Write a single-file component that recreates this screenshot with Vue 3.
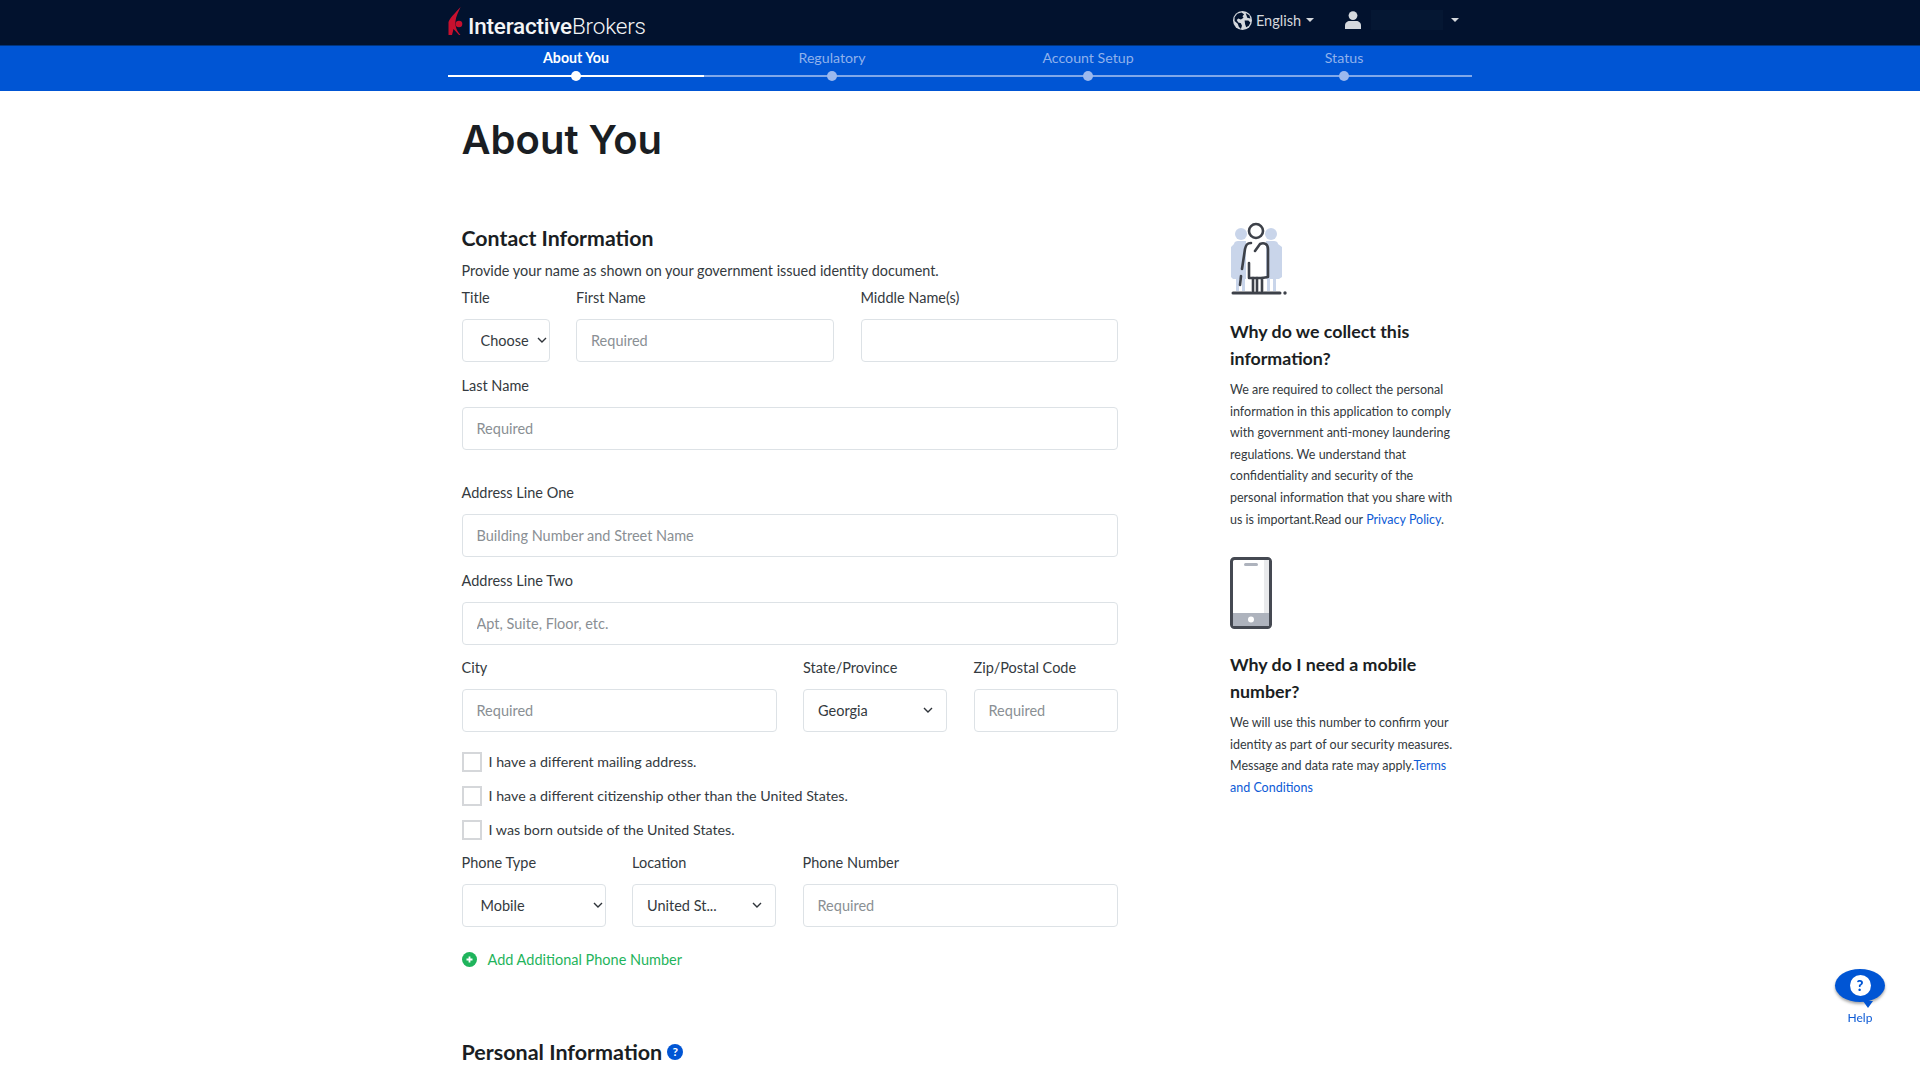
<template>
  <div class="page">
    <header class="topbar">
      <div class="wrap topbar-inner">
        <a class="logo">
          <svg class="logo-mark" viewBox="0 0 15 28" width="15" height="28">
            <path d="M12.6 0 C9 4 2.5 10 0.5 15 L0.5 28 L4 28 L5.5 22 L11 28 L12.5 28 C9 24 7 20 7.5 14 C8 9 10.5 5 12.6 0 Z" fill="#c8102e" />
            <circle cx="11" cy="17" r="3.3" fill="#c8102e" />
          </svg>
          <span class="logo-text"><b>Interactive</b>Brokers</span>
        </a>
        <div class="top-actions">
          <span class="lang">
            <svg viewBox="0 0 18 18" width="19" height="19">
              <circle cx="9" cy="9" r="9" fill="#d5d8dd" />
              <path d="M4 2.5 L8 1.5 L10.5 3 L9 5 L10 6.5 L7.5 8 L5 7 L3.5 8.5 L5 11 L7.5 11.5 L8.5 14 L7.5 17 L5.5 15 L4.5 12 L1.5 9.5 L1.5 6 Z M11 9 L14.5 9 L16.5 11 L15 14 L12.5 15.5 L11.5 12.5 Z M12 2 L15.5 4 L16.5 7 L13.5 6.5 Z" fill="#02122e" />
            </svg>
            English
            <i class="caret"></i>
          </span>
          <svg class="user" viewBox="0 0 16 18" width="16" height="18">
            <circle cx="8" cy="4.6" r="4.4" fill="#d5d8dd" />
            <path d="M0 18 L0 14.5 C0 11.5 2.5 10 4.5 10 L11.5 10 C13.5 10 16 11.5 16 14.5 L16 18 Z" fill="#d5d8dd" />
          </svg>
          <span class="account"></span>
          <i class="caret"></i>
        </div>
      </div>
    </header>

    <nav class="stepbar">
      <div class="wrap steps">
        <div v-for="(s, i) in steps" :key="s" class="step" :class="{ active: i === 0 }">
          <span class="step-name">{{ s }}</span>
          <span class="step-track"><span class="step-dot"></span></span>
        </div>
      </div>
    </nav>

    <main class="wrap content">
      <h1>About You</h1>
      <div class="columns">
        <form class="form" @submit.prevent>
          <h2>Contact Information</h2>
          <p class="hint">Provide your name as shown on your government issued identity document.</p>

          <div class="row row-name">
            <div class="field">
              <label>Title</label>
              <div class="select small">
                <select><option>Choose</option></select>
                <svg class="chev" viewBox="0 0 10 6" width="10" height="6"><path d="M1 1 L5 5 L9 1" /></svg>
              </div>
            </div>
            <div class="field">
              <label>First Name</label>
              <input placeholder="Required" />
            </div>
            <div class="field">
              <label>Middle Name(s)</label>
              <input />
            </div>
          </div>

          <div class="row row-gap">
            <div class="field">
              <label>Last Name</label>
              <input placeholder="Required" />
            </div>
          </div>

          <div class="row">
            <div class="field">
              <label>Address Line One</label>
              <input placeholder="Building Number and Street Name" />
            </div>
          </div>

          <div class="row">
            <div class="field">
              <label>Address Line Two</label>
              <input placeholder="Apt, Suite, Floor, etc." />
            </div>
          </div>

          <div class="row row-city">
            <div class="field">
              <label>City</label>
              <input placeholder="Required" />
            </div>
            <div class="field">
              <label>State/Province</label>
              <div class="select">
                <select><option>Georgia</option></select>
                <svg class="chev" viewBox="0 0 10 6" width="10" height="6"><path d="M1 1 L5 5 L9 1" /></svg>
              </div>
            </div>
            <div class="field">
              <label>Zip/Postal Code</label>
              <input placeholder="Required" />
            </div>
          </div>

          <div class="checks">
            <label v-for="c in checks" :key="c" class="check">
              <input type="checkbox" />
              <span>{{ c }}</span>
            </label>
          </div>

          <div class="row row-phone">
            <div class="field">
              <label>Phone Type</label>
              <div class="select inset">
                <select><option>Mobile</option></select>
                <svg class="chev" viewBox="0 0 10 6" width="10" height="6"><path d="M1 1 L5 5 L9 1" /></svg>
              </div>
            </div>
            <div class="field">
              <label>Location</label>
              <div class="select">
                <select><option>United St...</option></select>
                <svg class="chev" viewBox="0 0 10 6" width="10" height="6"><path d="M1 1 L5 5 L9 1" /></svg>
              </div>
            </div>
            <div class="field">
              <label>Phone Number</label>
              <input placeholder="Required" />
            </div>
          </div>

          <a class="add-phone">
            <svg viewBox="0 0 15 15" width="15" height="15">
              <circle cx="7.5" cy="7.5" r="7.5" fill="#1fb45c" />
              <path d="M7.5 4.5 V10.5 M4.5 7.5 H10.5" stroke="#fff" stroke-width="1.8" />
            </svg>
            Add Additional Phone Number
          </a>

          <h2 class="personal">
            Personal Information
            <span class="q-badge">?</span>
          </h2>
        </form>

        <aside class="side">
          <svg class="side-icon" viewBox="20 12 58 76" width="58" height="76">
            <g fill="#c9d5ea">
              <circle cx="31" cy="25" r="6" />
              <circle cx="61" cy="25" r="6" />
              <path d="M24 35 C24 33 26 32 28 32 L36 32 L36 70 L23 70 L21 68 L21 38 Z" />
              <path d="M68 35 C68 33 66 32 64 32 L56 32 L56 70 L69 70 L72 68 L72 38 Z" />
              <rect x="26" y="70" width="3" height="12" />
              <rect x="32" y="70" width="3" height="12" />
              <rect x="57" y="70" width="3" height="12" />
              <rect x="63" y="70" width="3" height="12" />
            </g>
            <g fill="none" stroke="#3d4149" stroke-width="2.6" stroke-linecap="round" stroke-linejoin="round">
              <circle cx="46" cy="22" r="7" fill="#fff" />
              <path d="M41 34 C37 34 36 36 35 40 L32 60" />
              <path d="M31 67 L30 76" />
              <path d="M45 42 L50 35 C54 33 58 35 58 40 L58 68 L52 69 L52 82" />
              <path d="M39 54 L39 69 L52 69" />
              <path d="M43 69 L43 82 M47 69 L47 82" />
            </g>
            <path d="M23 84 H70" stroke="#3d4149" stroke-width="3" stroke-linecap="round" />
            <circle cx="75" cy="84" r="1.7" fill="#3d4149" />
          </svg>
          <h3>Why do we collect this information?</h3>
          <p>We are required to collect the personal information in this application to comply with government anti-money laundering regulations. We understand that confidentiality and security of the personal information that you share with us is important.Read our <a>Privacy Policy</a>.</p>

          <svg class="side-icon phone" viewBox="0 0 42 72" width="42" height="72">
            <rect x="1.5" y="1.5" width="39" height="69" rx="3" fill="#fff" stroke="#454952" stroke-width="3" />
            <rect x="34" y="3" width="5" height="53" fill="#e9eaec" />
            <rect x="3" y="56" width="36" height="13" fill="#aeb3bd" />
            <rect x="14" y="6" width="14" height="3" rx="1.5" fill="#aeb3bd" />
            <circle cx="21" cy="62.5" r="3" fill="#fff" />
          </svg>
          <h3>Why do I need a mobile number?</h3>
          <p>We will use this number to confirm your identity as part of our security measures. Message and data rate may apply.<a>Terms and Conditions</a></p>
        </aside>
      </div>
    </main>

    <a class="help">
      <span class="bubble"><span class="bubble-q">?</span></span>
      <span class="help-label">Help</span>
    </a>
  </div>
</template>

<script setup>
const steps = ["About You", "Regulatory", "Account Setup", "Status"];

const checks = [
  "I have a different mailing address.",
  "I have a different citizenship other than the United States.",
  "I was born outside of the United States.",
];
</script>

<style>
html,
body {
  margin: 0;
  background: #fff;
}
</style>

<style scoped>
.page {
  height: 1077px;
  overflow: hidden;
  font-family: "Lato", "Noto Sans", sans-serif;
  color: #343a40;
  font-size: 14.5px;
}

.wrap {
  width: 1024px;
  margin: 0 auto;
}

/* top bar */
.topbar {
  height: 45px;
  background: #02122e;
  border-bottom: 1px solid #01357f;
}

.topbar-inner {
  height: 45px;
  display: flex;
  align-items: flex-start;
  justify-content: space-between;
}

.logo {
  display: flex;
  align-items: flex-end;
  gap: 5px;
  margin-top: 7px;
}

.logo-text {
  font-family: "Roboto", sans-serif;
  font-size: 22.5px;
  color: #f4f5f6;
  line-height: 26px;
  letter-spacing: -0.2px;
  font-weight: 300;
  margin-bottom: -4px;
}

.logo-text b {
  font-weight: 500;
}

.top-actions {
  display: flex;
  align-items: center;
  color: #d5d8dd;
  margin: 0 13px 0 0;
  height: 40px;
}

.lang {
  display: flex;
  align-items: center;
  gap: 4px;
}

.caret {
  display: inline-block;
  width: 0;
  height: 0;
  border-left: 4px solid transparent;
  border-right: 4px solid transparent;
  border-top: 4px solid #d5d8dd;
  margin-left: 1px;
}

.user {
  margin-left: 31px;
}

.account {
  width: 72px;
  height: 20px;
  margin: 0 7px 0 10px;
  background: #051733;
}

/* step bar */
.stepbar {
  height: 45px;
  background: #0055d4;
}

.steps {
  display: flex;
}

.step {
  flex: 1;
  display: flex;
  flex-direction: column;
  align-items: center;
  color: #8fb1ec;
}

.step-name {
  line-height: 20px;
  height: 21px;
  padding-top: 2px;
  font-size: 14.2px;
}

.step-track {
  position: relative;
  display: block;
  width: 100%;
  height: 2px;
  margin-top: 6px;
  background: #80a8ea;
}

.step-dot {
  position: absolute;
  left: 50%;
  top: 50%;
  width: 10px;
  height: 10px;
  margin: -5px 0 0 -5px;
  border-radius: 50%;
  background: #9cb9ee;
}

.step.active {
  color: #fff;
  font-weight: 700;
}

.step.active .step-track,
.step.active .step-dot {
  background: #fff;
}

/* content */
.content {
  padding-left: 13.5px;
  box-sizing: border-box;
}

h1 {
  margin: 0;
  padding-top: 24px;
  height: 89px;
  box-sizing: border-box;
  font-family: "Inter", sans-serif;
  font-size: 40px;
  line-height: 50px;
  font-weight: 600;
  color: #1a1e23;
}

.columns {
  display: flex;
  gap: 112.5px;
}

.form {
  width: 656px;
  flex: none;
  padding-top: 43px;
}

h2 {
  margin: 0;
  font-size: 21.3px;
  line-height: 30px;
  font-weight: 700;
  color: #1a1e23;
}

.hint {
  margin: 7px 0 5px;
  line-height: 22px;
  font-size: 14.4px;
  color: #343a40;
}

.row {
  display: grid;
  grid-template-columns: 1fr;
  gap: 26.5px;
  margin-bottom: 12.5px;
}

.row-name {
  grid-template-columns: 88px 258px 257px;
}

.row-gap {
  margin-bottom: 32.5px;
}

.row-city {
  grid-template-columns: 315px 144px 144px;
  margin-bottom: 19.5px;
}

.row-phone {
  grid-template-columns: 144px 144px 315px;
}

.field {
  min-width: 0;
}

.field > label {
  display: block;
  height: 22px;
  line-height: 22px;
  margin-bottom: 10px;
}

.field input,
.field select {
  display: block;
  width: 100%;
  height: 43px;
  box-sizing: border-box;
  padding: 0 14px;
  font: inherit;
  color: #343a40;
  background: #fff;
  border: 1px solid #dde2e6;
  border-radius: 4px;
  outline: none;
  appearance: none;
}

.field input::placeholder {
  color: #8a8f94;
  opacity: 1;
}

.select {
  position: relative;
}

.chev {
  position: absolute;
  right: 14px;
  top: 18px;
  pointer-events: none;
}

.chev path {
  fill: none;
  stroke: #2f343a;
  stroke-width: 1.4;
}

.select.small select,
.select.inset select {
  padding-left: 18px;
}

.select.small .chev,
.select.inset .chev {
  right: 3px;
}

.checks {
  display: flex;
  flex-direction: column;
  gap: 14px;
  margin-bottom: 12.5px;
  font-size: 14.25px;
}

.check {
  display: flex;
  align-items: center;
  gap: 7px;
  height: 20px;
}

.check input {
  appearance: none;
  width: 20px;
  height: 20px;
  margin: 0;
  background: #fff;
  border: 2px solid #d5d7da;
  box-sizing: border-box;
}

.add-phone {
  display: flex;
  align-items: center;
  gap: 11px;
  margin-top: 21.5px;
  height: 22px;
  color: #1fb45c;
}

.personal {
  display: flex;
  align-items: center;
  gap: 5px;
  margin-top: 66.5px;
  font-size: 21.5px;
}

.q-badge {
  width: 16px;
  height: 16px;
  border-radius: 50%;
  background: #0055d4;
  color: #fff;
  font-size: 12px;
  line-height: 16px;
  text-align: center;
}

/* right column */
.side {
  width: 228px;
  flex: none;
  padding-top: 43px;
}

.side-icon {
  display: block;
  margin-top: -2px;
}

.side-icon.phone {
  margin-top: 27px;
  margin-bottom: 22px;
}

h3 {
  margin: 21px 0 8px;
  font-size: 17.8px;
  line-height: 26.5px;
  font-weight: 700;
  color: #1a1e23;
}

.side p {
  margin: 0;
  font-size: 12.5px;
  line-height: 21.6px;
  color: #343a40;
}

.side a {
  color: #0d5bd6;
}

/* help */
.help {
  position: fixed;
  left: 1835px;
  top: 969px;
  width: 50px;
  display: flex;
  flex-direction: column;
  align-items: center;
}

.bubble {
  position: relative;
  display: flex;
  align-items: center;
  justify-content: center;
  width: 50px;
  height: 33px;
  border-radius: 50%;
  background: #0055d4;
  box-shadow: 0 2px 3px rgba(0, 0, 0, 0.35);
}

.bubble::after {
  content: "";
  position: absolute;
  left: 28px;
  bottom: -6px;
  border-left: 5px solid transparent;
  border-right: 5px solid transparent;
  border-top: 7px solid #0055d4;
}

.bubble-q {
  width: 21px;
  height: 21px;
  border-radius: 50%;
  background: #fff;
  color: #0055d4;
  font-weight: 900;
  font-size: 15px;
  line-height: 21px;
  text-align: center;
}

.help-label {
  margin-top: 8px;
  font-size: 12px;
  line-height: 16px;
  color: #0d5bd6;
}
</style>
